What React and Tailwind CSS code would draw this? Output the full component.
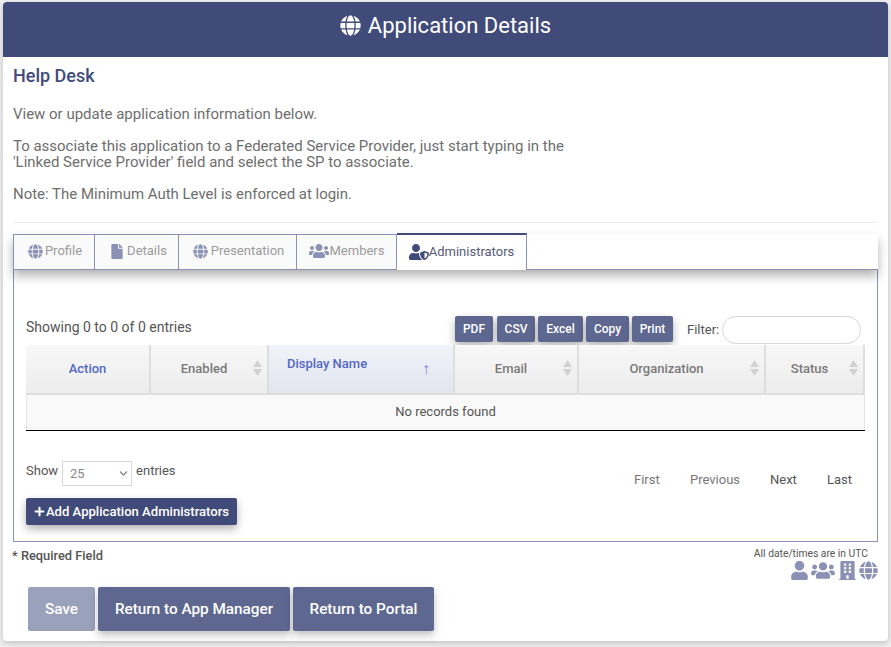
import React from "react";
import { FaGlobe, FaFile, FaUsers, FaUserShield, FaPlus, FaUser, FaBuilding, FaChevronDown } from "react-icons/fa";

function Sort() {
  return (
    <svg width="9" height="16" viewBox="0 0 9 16" className="shrink-0">
      <path d="M4.5 0 L9 7 L0 7 Z M4.5 16 L0 9 L9 9 Z" fill="#d2d2d2" />
    </svg>
  );
}

function Tab({ icon, label, active, w }) {
  return (
    <div
      className={
        active
          ? "relative z-10 -mt-[1px] flex h-[37px] items-center justify-center border-r border-t-[2px] border-r-[#8a91b4] border-t-[#414b79] bg-white pb-[2px] text-[13px] text-[#555a78] " + w
          : "flex h-[35px] items-center justify-center border-r border-t border-[#8a91b4] bg-[#fafafa] pb-[2px] text-[13px] text-[#9a9a9a] " + w
      }
    >
      {icon}
      <span>{label}</span>
    </div>
  );
}

function Btn({ children, w }) {
  return (
    <div className={"flex h-[26px] items-center justify-center rounded-[2px] bg-[#5d6790] text-[12px] font-medium text-white shadow-[0_4px_8px_rgba(0,0,0,0.3)] " + w}>
      {children}
    </div>
  );
}

function Th({ w, label, sort, blue }) {
  return (
    <div className={"relative flex h-full items-center justify-center border-r-[2px] border-[#dedede] bg-gradient-to-b from-[#f8f8f8] to-[#ececec] text-[13px] font-medium " + (sort ? "pr-[10px] " : "") + (blue ? "text-[#5468c4] " : "text-[#7a7a7a] ") + w}>
      <span>{label}</span>
      {sort && (
        <span className="absolute right-[5px] top-[15px]">
          <Sort />
        </span>
      )}
    </div>
  );
}

function BigBtn({ children, w, faded }) {
  return (
    <div className={"flex h-[44px] items-center justify-center rounded-[2px] text-[15.3px] font-medium text-white " + (faded ? "bg-[#9aa1bb] " : "bg-[#5d6790] shadow-[0_4px_8px_rgba(0,0,0,0.25)] ") + w}>
      {children}
    </div>
  );
}

export default function App() {
  return (
    <div className="h-[647px] w-[891px] overflow-hidden bg-[#efefef] pl-[3px] pt-[2px] font-['Roboto',sans-serif]">
      <div className="h-[639px] w-[885px] rounded-[4px] bg-white shadow-[0_2px_6px_rgba(0,0,0,0.2)]">
        <div className="flex h-[55px] items-center justify-center gap-[7px] rounded-t-[4px] bg-[#414b79] pb-[8px] text-[22px] text-white">
          <FaGlobe className="h-[21px] w-[21px]" />
          <span>Application Details</span>
        </div>

        <div className="px-[10px]">
          <div className="mt-[7px] text-[18px] font-medium leading-[24px] text-[#414b79]">Help Desk</div>
          <p className="mt-[16px] text-[14.98px] leading-[20px] text-[#6e6e6e]">View or update application information below.</p>
          <p className="mt-[14px] w-[570px] text-[14.98px] leading-[16px] text-[#6e6e6e]">
            To associate this application to a Federated Service Provider, just start typing in the 'Linked Service Provider' field and select the SP to associate.
          </p>
          <p className="mt-[16px] text-[14.98px] leading-[16px] text-[#6e6e6e]">Note: The Minimum Auth Level is enforced at login.</p>
          <div className="mt-[20px] h-px bg-[#ececec]" />

          <div className="mt-[11px] w-[865px]">
            <div className="relative z-10 flex h-[36px] items-start border-b border-l border-[#8a91b4] bg-white shadow-[0_6px_10px_rgba(0,0,0,0.3)]">
              <Tab w="w-[81px] pl-[2px]" label="Profile" icon={<FaGlobe className="mr-[2px] h-[15px] w-[15px] text-[#8a91b4]" />} />
              <Tab w="w-[84px] pl-[5px]" label="Details" icon={<FaFile className="mr-[4px] h-[15px] w-[12px] text-[#8a91b4]" />} />
              <Tab w="w-[118px] pl-[2px]" label="Presentation" icon={<FaGlobe className="mr-[3px] h-[15px] w-[15px] text-[#8a91b4]" />} />
              <Tab w="w-[100px]" label="Members" icon={<FaUsers className="mr-[1px] h-[16px] w-[20px] text-[#8a91b4]" />} />
              <Tab active w="w-[130px]" label="Administrators" icon={<FaUserShield className="h-[16px] w-[20px] text-[#414b79]" />} />
            </div>

            <div className="h-[272px] border-x border-b border-[#8a91b4] px-[12px] pt-[46px]">
              <div className="flex h-[29px] items-start">
                <div className="w-[429px] pt-[2px] text-[14px] leading-[18px] text-[#555]">Showing 0 to 0 of 0 entries</div>
                <div className="flex gap-[3px]">
                  <Btn w="w-[38px] mr-[1px]">PDF</Btn>
                  <Btn w="w-[38px]">CSV</Btn>
                  <Btn w="w-[45px]">Excel</Btn>
                  <Btn w="w-[43px]">Copy</Btn>
                  <Btn w="w-[41px]">Print</Btn>
                </div>
                <div className="ml-[14px] text-[13px] leading-[28px] text-[#555]">Filter:</div>
                <div className="ml-[3px] h-[28px] w-[139px] rounded-[14px] border border-[#d8d8d8] bg-white" />
              </div>

              <div className="w-[839px] border-b-[1px] border-black">
                <div className="flex h-[50px] border-b-[2px] border-[#dedede]">
                  <Th w="w-[125px]" label="Action" blue />
                  <Th w="w-[118px]" label="Enabled" sort />
                  <div className="relative h-full w-[186px] border-r-[2px] border-[#dedede] bg-gradient-to-b from-[#f0f3f9] to-[#e2e5ee] pl-[18px] pt-[9px] text-[13px] font-medium text-[#5468c4]">
                    Display Name
                    <span className="absolute right-[23px] top-[12px] text-[16px] font-normal text-[#8a7fd8]">↑</span>
                  </div>
                  <Th w="w-[124px]" label="Email" sort />
                  <Th w="w-[187px]" label="Organization" sort />
                  <Th w="w-[99px]" label="Status" sort />
                </div>
                <div className="flex h-[35px] items-center justify-center border-x border-[#e4e4e4] bg-[#f9f9f9] pb-[2px] text-[13px] text-[#555]">
                  No records found
                </div>
              </div>

              <div className="mt-[30px] flex h-[28px] items-start">
                <span className="text-[13px] leading-[20px] text-[#555]">Show</span>
                <div className="ml-[4px] flex h-[25px] w-[70px] items-center justify-between border border-[#d8d8d8] bg-white pl-[7px] pr-[3px] text-[13px] text-[#888]">
                  <span>25</span>
                  <FaChevronDown className="h-[9px] w-[9px] text-[#888]" />
                </div>
                <span className="ml-[4px] text-[13px] leading-[20px] text-[#555]">entries</span>
                <div className="ml-auto flex pt-[10px] text-[13px] leading-[18px]">
                  <span className="w-[56px] text-[#777]">First</span>
                  <span className="w-[80px] text-[#777]">Previous</span>
                  <span className="w-[57px] text-[#555]">Next</span>
                  <span className="w-[38px] text-[#555]">Last</span>
                </div>
              </div>

              <div className="mt-[9px] flex h-[27px] w-[211px] items-center justify-center rounded-[2px] bg-[#414b79] text-[13.1px] font-medium text-white shadow-[0_4px_8px_rgba(0,0,0,0.3)]">
                <FaPlus className="mr-[1px] h-[11px] w-[11px]" />
                Add Application Administrators
              </div>
            </div>
          </div>

          <div className="flex h-[44px] w-[865px] justify-between">
            <div className="-ml-[1px] pt-[6px] text-[12.85px] font-medium leading-[16px] text-[#555]">* Required Field</div>
            <div className="flex flex-col items-end">
              <div className="mr-[10px] pt-[6px] text-[10.3px] leading-[12px] text-[#555]">All date/times are in UTC</div>
              <div className="mt-[1px] flex items-center gap-[3px] text-[#8a91b4]">
                <FaUser className="h-[19px] w-[17px]" />
                <FaUsers className="h-[19px] w-[24px]" />
                <FaBuilding className="ml-[1px] h-[19px] w-[17px]" />
                <FaGlobe className="h-[19px] w-[19px]" />
              </div>
            </div>
          </div>

          <div className="ml-[15px] mt-[1px] flex gap-[3px]">
            <BigBtn faded w="w-[67px]">Save</BigBtn>
            <BigBtn w="w-[192px]">Return to App Manager</BigBtn>
            <BigBtn w="w-[141px]">Return to Portal</BigBtn>
          </div>
        </div>
      </div>
    </div>
  );
}
